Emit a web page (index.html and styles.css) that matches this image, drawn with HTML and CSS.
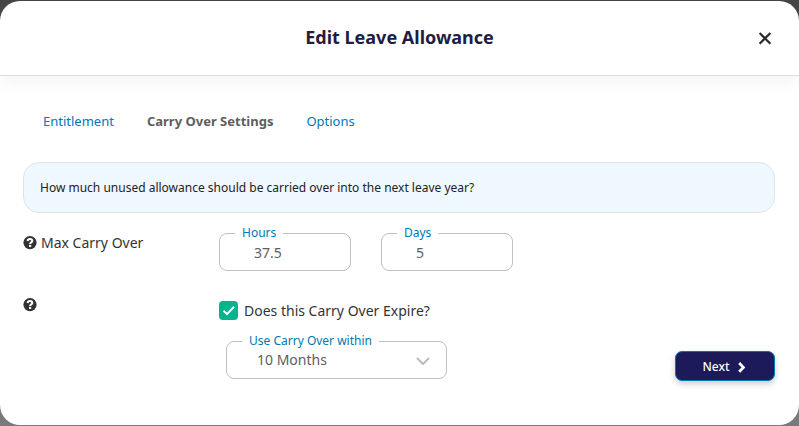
FILE: index.html
```html
<!DOCTYPE html>
<html lang="en">
<head>
  <meta charset="UTF-8">
  <meta name="viewport" content="width=device-width, initial-scale=1.0">
  <title>Edit Leave Allowance</title>
  <link rel="stylesheet" href="styles.css">
</head>
<body>
  <div class="modal" role="dialog" aria-labelledby="modal-title">
    <header class="modal-header">
      <h1 id="modal-title">Edit Leave Allowance</h1>
      <button class="close-btn" type="button" aria-label="Close">
        <svg width="14" height="14" viewBox="0 0 14 14"><path d="M1.6 2L12.4 12.8M12.4 2L1.6 12.8" fill="none" stroke="#2b2b2f" stroke-width="2.2"/></svg>
      </button>
    </header>

    <nav class="tabs">
      <a href="#entitlement">Entitlement</a>
      <a href="#carry-over" class="active">Carry Over Settings</a>
      <a href="#options">Options</a>
    </nav>

    <form class="modal-body">
      <p class="info">How much unused allowance should be carried over into the next leave year?</p>

      <div class="form-row">
        <div class="row-label">
          <svg class="help" viewBox="0 0 14 14"><circle cx="7" cy="6.6" r="6.6" fill="#333"/><path d="M4.6 5C4.8 3.5 5.8 3 6.9 3C8.3 3 9.3 3.7 9.3 4.9C9.3 6.5 7.1 6.3 7.1 8" fill="none" stroke="#fff" stroke-width="2"/><rect x="6" y="8.9" width="2.2" height="2" fill="#fff"/></svg>
          <span>Max Carry Over</span>
        </div>
        <div class="fields">
          <div class="field">
            <label for="hours">Hours</label>
            <input type="text" id="hours" value="37.5">
          </div>
          <div class="field">
            <label for="days">Days</label>
            <input type="text" id="days" value="5">
          </div>
        </div>
      </div>

      <div class="form-row expire-row">
        <div class="row-label">
          <svg class="help" viewBox="0 0 14 14"><circle cx="7" cy="6.6" r="6.6" fill="#333"/><path d="M4.6 5C4.8 3.5 5.8 3 6.9 3C8.3 3 9.3 3.7 9.3 4.9C9.3 6.5 7.1 6.3 7.1 8" fill="none" stroke="#fff" stroke-width="2"/><rect x="6" y="8.9" width="2.2" height="2" fill="#fff"/></svg>
        </div>
        <div class="expire">
          <div class="check">
            <span class="check-box">
              <input type="checkbox" id="expires" checked>
              <svg viewBox="0 0 19 19"><path d="M4.5 9.8L8 13.2L15 5.8" fill="none" stroke="#fff" stroke-width="2"/></svg>
            </span>
            <label for="expires">Does this Carry Over Expire?</label>
          </div>
          <div class="field field-select">
            <label for="within">Use Carry Over within</label>
            <select id="within">
              <option>3 Months</option>
              <option>6 Months</option>
              <option selected>10 Months</option>
              <option>12 Months</option>
            </select>
            <svg class="chevron" viewBox="0 0 14 8"><path d="M1 1L7 7L13 1" fill="none" stroke="#bbb" stroke-width="2"/></svg>
          </div>
        </div>
        <button class="btn" type="button">
          Next
          <svg width="8" height="14" viewBox="0 0 8 14"><path d="M1.2 4L5.4 8.4L1.2 12.8" fill="none" stroke="#fff" stroke-width="2.8"/></svg>
        </button>
      </div>
    </form>
  </div>
</body>
</html>
```
FILE: styles.css
```css
:root {
  --navy: #1c1a59;
  --title: #231c42;
  --link: #0078b3;
  --green: #04b48c;
  --text: #333;
  --border: #bfbfbf;
}

* {
  box-sizing: border-box;
}

body {
  margin: 0;
  padding: 1px 0;
  min-height: 100vh;
  display: flex;
  font-family: "Noto Sans", "Open Sans", sans-serif;
  font-size: 14px;
  color: var(--text);
  background: linear-gradient(#454545, #7a7a7a);
}

.modal {
  flex: 1;
  background: #fff;
  border-radius: 20px;
  overflow: hidden;
}

.modal-header {
  display: grid;
  grid-template-columns: 1fr auto 1fr;
  align-items: center;
  height: 75px;
  padding: 0 27px;
  border-bottom: 1px solid #ddd;
  box-shadow: 0 8px 16px rgba(0, 0, 0, 0.04);
}

.modal-header h1 {
  grid-column: 2;
  margin: 0;
  padding-bottom: 2px;
  font-size: 18px;
  line-height: 24px;
  color: var(--title);
}

.close-btn {
  display: flex;
  justify-self: end;
  padding: 0;
  border: none;
  background: none;
  cursor: pointer;
}

.tabs {
  display: flex;
  gap: 33px;
  padding: 35px 43px 0;
  font-size: 13px;
  line-height: 20px;
}

.tabs a {
  color: var(--link);
  text-decoration: none;
}

.tabs .active {
  color: #5e5e5e;
  font-weight: bold;
}

.modal-body {
  padding: 31px 24px 44px 23px;
}

.info {
  margin: 0 0 20px;
  padding: 16px;
  border: 1px solid #dfe3e8;
  border-radius: 16px;
  background: #f0f8ff;
  font-size: 12px;
  line-height: 17px;
  color: #222;
}

.form-row {
  display: grid;
  grid-template-columns: 196px 1fr auto;
  align-items: start;
}

.row-label {
  display: flex;
  align-items: center;
  gap: 4px;
  line-height: 20px;
}

.help {
  width: 14px;
  height: 14px;
}

.fields {
  display: flex;
  gap: 30px;
}

.field {
  position: relative;
  width: 132px;
}

.field label {
  position: absolute;
  top: -8px;
  left: 16px;
  padding: 0 7px;
  background: #fff;
  font-size: 12px;
  line-height: 16px;
  color: var(--link);
}

.field input,
.field select {
  display: block;
  width: 100%;
  height: 38px;
  padding: 0 34px;
  border: 1px solid var(--border);
  border-radius: 8px;
  background: #fff;
  font: inherit;
  color: #5e5e5e;
  appearance: none;
}

.expire-row {
  margin-top: 30px;
}

.expire-row .row-label {
  margin-top: -3px;
}

.check {
  display: flex;
  align-items: center;
  gap: 6px;
  line-height: 19px;
}

.check-box {
  display: grid;
  width: 19px;
  height: 19px;
}

.check-box input,
.check-box svg {
  grid-area: 1 / 1;
  width: 19px;
  height: 19px;
  margin: 0;
}

.check-box input {
  appearance: none;
  border-radius: 4px;
  background: #ccc;
}

.check-box input:checked {
  background: var(--green);
}

.check-box svg {
  pointer-events: none;
}

.field-select {
  width: 221px;
  margin: 21px 0 0 7px;
}

.field-select select {
  padding: 0 30px 2px;
}

.chevron {
  position: absolute;
  top: 16px;
  right: 17px;
  width: 14px;
  height: 8px;
  pointer-events: none;
}

.btn {
  display: flex;
  align-items: center;
  justify-content: center;
  align-self: end;
  gap: 8px;
  width: 100px;
  height: 30px;
  margin-top: 50px;
  padding: 0 2px 0 0;
  border: 1px solid var(--link);
  border-radius: 7px;
  background: var(--navy);
  box-shadow: 0 3px 6px rgba(0, 0, 0, 0.2);
  color: #fff;
  font: 500 12px "Noto Sans", "Open Sans", sans-serif;
  cursor: pointer;
}

.btn:hover {
  background: var(--link);
}
```
